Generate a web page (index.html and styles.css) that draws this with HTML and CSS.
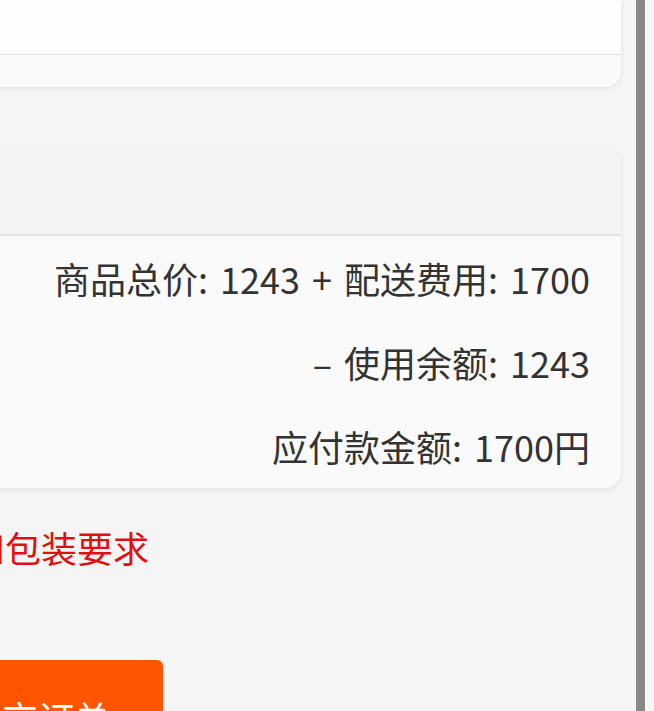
FILE: index.html
```html
<!DOCTYPE html>
<html lang="zh-CN">
<head>
<meta charset="utf-8">
<title>订单确认</title>
<link rel="stylesheet" href="styles.css">
</head>
<body>
<div class="viewport">
  <main class="content">
    <section class="card card-top">
      <div class="card-top-body"></div>
      <div class="card-top-foot"></div>
    </section>
    <section class="card card-summary">
      <div class="summary-head"></div>
      <div class="summary-body">
        <div class="line">商品总价: 1243 + 配送费用: 1700</div>
        <div class="line">– 使用余额: 1243</div>
        <div class="line">应付款金额: 1700円</div>
      </div>
    </section>
    <p class="note">和包装要求</p>
    <button class="submit" type="button">提交订单</button>
  </main>
  <div class="scrollbar"></div>
  <div class="scroll-edge"></div>
</div>
</body>
</html>
```
FILE: styles.css
```css
html, body {
  margin: 0;
  padding: 0;
  background: #f5f5f5;
  font-family: "Noto Sans CJK SC", "Noto Sans", sans-serif;
  color: #333;
}
.viewport {
  display: flex;
  height: 711px;
  overflow: hidden;
}
.content {
  flex: 1;
  overflow: hidden;
  padding-right: 15px;
  display: flex;
  flex-direction: column;
  align-items: flex-start;
}
.content > * {
  flex-shrink: 0;
}
.card {
  align-self: stretch;
  margin-left: -40px;
  border-radius: 0 0 16px 16px;
  box-shadow: 0 2px 5px rgba(0, 0, 0, 0.08);
  overflow: hidden;
}
.card-top-body {
  height: 54px;
  background: #fefefe;
  border-bottom: 1px solid #e2e2e2;
}
.card-top-foot {
  height: 32px;
  background: #fafafa;
}
.card-summary {
  margin-top: 58px;
  border-radius: 16px;
  background: #fafafa;
}
.summary-head {
  height: 89px;
  background: #f5f3f4;
  border-bottom: 2px solid #e5e3e4;
}
.summary-body {
  padding-right: 31px;
  text-align: right;
  font-size: 36px;
  word-spacing: 4px;
}
.line {
  line-height: 84px;
  height: 84px;
  white-space: nowrap;
}
.note {
  margin: 36px 0 0 -31px;
  font-size: 36px;
  line-height: 46px;
  color: #e01010;
  white-space: nowrap;
}
.submit {
  margin: 90px 0 0 -87px;
  width: 250px;
  height: 112px;
  border: 0;
  border-radius: 6px;
  background: #ff5500;
  color: #fff;
  font-family: inherit;
  font-size: 36px;
  padding: 0;
  padding-top: 37px;
  line-height: 40px;
  display: flex;
  align-items: flex-start;
  justify-content: center;
}
.scrollbar {
  width: 9px;
  background: #888;
  flex-shrink: 0;
}
.scroll-edge {
  width: 9px;
  background: #f7f7f7;
  flex-shrink: 0;
}
```
